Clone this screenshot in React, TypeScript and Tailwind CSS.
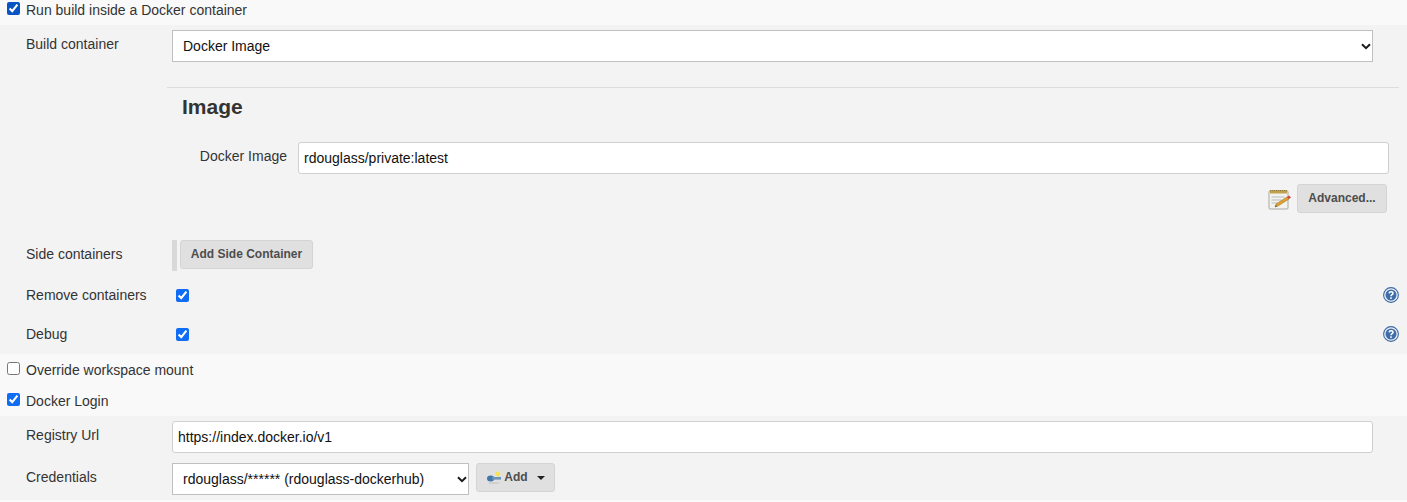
import type { ReactNode } from "react";

const font = "font-['Liberation_Sans',Arial,sans-serif]";
const fieldBase = "border bg-white text-[14px] text-[#111] outline-none";

function Chevron() {
    return (
        <svg
            width="10"
            height="7"
            viewBox="0 0 10 7"
            className="pointer-events-none absolute right-[2px] top-1/2 -mt-[3px]"
        >
            <path d="M1 1.2 L5 5.2 L9 1.2" fill="none" stroke="#1a1a1a" strokeWidth="2" />
        </svg>
    );
}

function Select({ value, className }: { value: string; className: string }) {
    return (
        <div className={`relative h-8 ${className}`}>
            <select
                defaultValue={value}
                className={`h-full w-full appearance-none border-[#c0c0c0] pl-[10px] ${fieldBase}`}
            >
                <option>{value}</option>
            </select>
            <Chevron />
        </div>
    );
}

function TextInput({ value, className }: { value: string; className: string }) {
    return (
        <input
            type="text"
            readOnly
            value={value}
            className={`h-8 rounded-[3px] border-[#cfcfcf] px-[5px] ${fieldBase} ${className}`}
        />
    );
}

function Button({ children, className }: { children: ReactNode; className: string }) {
    return (
        <button
            type="button"
            className={`flex items-center justify-center rounded-[3px] border border-[#d4d4d4] bg-[#e0e0e0] pb-[2px] text-[12px] font-bold text-[#4d4d4d] ${className}`}
        >
            {children}
        </button>
    );
}

function CheckRow({ label, checked, className }: { label: string; checked: boolean; className: string }) {
    return (
        <label className={`flex items-start pl-[7px] ${className}`}>
            <input
                type="checkbox"
                readOnly
                checked={checked}
                className="m-0 size-[13px] accent-[#0f6cf5]"
            />
            <span className="ml-[6px] text-[14px] leading-[16px] text-[#333]">{label}</span>
        </label>
    );
}

function HelpIcon() {
    return (
        <svg width="16" height="16" viewBox="0 0 16 16">
            <circle cx="8" cy="8" r="7.4" fill="#eef2f7" stroke="#3d68a3" strokeWidth="1.1" />
            <circle cx="8" cy="8" r="5.5" fill="#3f6da8" />
            <path
                d="M6.1 6.4 C6.2 4.2 10 4.2 10 6.4 C10 7.8 8 7.7 8 9.2"
                fill="none"
                stroke="#fff"
                strokeWidth="1.5"
            />
            <rect x="7.2" y="10.3" width="1.6" height="1.6" fill="#fff" />
        </svg>
    );
}

function NotepadIcon() {
    return (
        <svg width="24" height="24" viewBox="0 0 24 24">
            <rect x="1" y="4" width="19" height="18" rx="1" fill="#f2f2ee" stroke="#a9a9a4" />
            <rect x="2" y="3" width="17" height="3.5" fill="#c3a24f" />
            <path d="M2 3.6h17" stroke="#8d7a3f" strokeDasharray="1 1" />
            <path d="M3.5 10h13M3.5 13h10M3.5 16h6" stroke="#b9bcc0" />
            <path d="M7 20 L8 17 L19 10 L21 12 L10 19 Z" fill="#e0a030" stroke="#8f6a22" strokeWidth="0.5" />
            <path d="M19 10 L21 8.6 L23 10.6 L21 12 Z" fill="#d8443a" />
            <path d="M7 20 L8 18.4 L9 19.3 Z" fill="#333" />
        </svg>
    );
}

function KeyIcon() {
    return (
        <svg width="16" height="16" viewBox="0 0 16 16">
            <ellipse cx="8" cy="14" rx="6" ry="1" fill="#cfcfcf" />
            <ellipse cx="4.6" cy="9.5" rx="3.6" ry="3" fill="#3f78ad" />
            <rect x="6" y="8" width="9" height="2.6" fill="#6b93b8" />
            <circle cx="12" cy="5" r="2.4" fill="#f3e35a" />
        </svg>
    );
}

function Label({ children, className }: { children: ReactNode; className?: string }) {
    return (
        <div className={`w-[172px] shrink-0 pl-[26px] text-[14px] leading-[16px] text-[#333] ${className ?? ""}`}>
            {children}
        </div>
    );
}

export default function App() {
    return (
        <div className={`flex h-[502px] w-[1407px] flex-col overflow-hidden bg-[#f9f9f9] ${font}`}>
            <CheckRow label="Run build inside a Docker container" checked className="h-[25px] pt-[2px]" />

            <section className="flex h-[329px] flex-col bg-[#f3f3f3]">
                <div className="flex pt-[5px]">
                    <Label className="pt-[6px]">Build container</Label>
                    <Select value="Docker Image" className="w-[1201px]" />
                </div>

                <div className="ml-[167px] mr-[8px] mt-[25px] flex h-[128px] flex-col border-t border-[#dcdcdc]">
                    <h2 className="mt-[7px] pl-[15px] text-[21px] leading-[24px] font-bold text-[#333]">Image</h2>
                    <div className="mt-[23px] flex">
                        <div className="w-[131px] pt-[6px] text-right text-[14px] leading-[16px] text-[#333]">
                            <span className="pr-[11px]">Docker Image</span>
                        </div>
                        <TextInput value="rdouglass/private:latest" className="w-[1091px]" />
                    </div>
                    <div className="mt-[10px] flex items-center justify-end gap-[5px] pr-[12px]">
                        <NotepadIcon />
                        <Button className="h-[29px] w-[90px]">Advanced...</Button>
                    </div>
                </div>

                <div className="mt-[25px] flex">
                    <Label className="pt-[6px]">Side containers</Label>
                    <div className="h-[31px] w-[5px] bg-[#d9d9d9]" />
                    <Button className="ml-[3px] h-[29px] w-[133px]">Add Side Container</Button>
                </div>

                <div className="mt-[16px] flex h-[16px] items-center">
                    <Label>Remove containers</Label>
                    <input type="checkbox" readOnly checked className="m-0 ml-[4px] size-[13px] accent-[#0f6cf5]" />
                    <div className="ml-auto mr-[8px]">
                        <HelpIcon />
                    </div>
                </div>

                <div className="mt-[23px] flex h-[16px] items-center">
                    <Label>Debug</Label>
                    <input type="checkbox" readOnly checked className="m-0 ml-[4px] size-[13px] accent-[#0f6cf5]" />
                    <div className="ml-auto mr-[8px]">
                        <HelpIcon />
                    </div>
                </div>
            </section>

            <CheckRow label="Override workspace mount" checked={false} className="h-[31px] pt-[8px]" />
            <CheckRow label="Docker Login" checked className="h-[31px] pt-[8px]" />

            <section className="flex h-[84px] flex-col bg-[#f3f3f3]">
                <div className="flex pt-[5px]">
                    <Label className="pt-[6px]">Registry Url</Label>
                    <TextInput value="https://index.docker.io/v1" className="w-[1201px]" />
                </div>
                <div className="mt-[10px] flex">
                    <Label className="pt-[6px]">Credentials</Label>
                    <Select value="rdouglass/****** (rdouglass-dockerhub)" className="w-[297px]" />
                    <Button className="ml-[7px] h-[29px] w-[79px] gap-[2px]">
                        <KeyIcon />
                        <span>Add</span>
                        <span className="ml-[7px] mt-[2px] h-0 w-0 border-x-[4px] border-t-[4px] border-x-transparent border-t-[#222]" />
                    </Button>
                </div>
            </section>
        </div>
    );
}
